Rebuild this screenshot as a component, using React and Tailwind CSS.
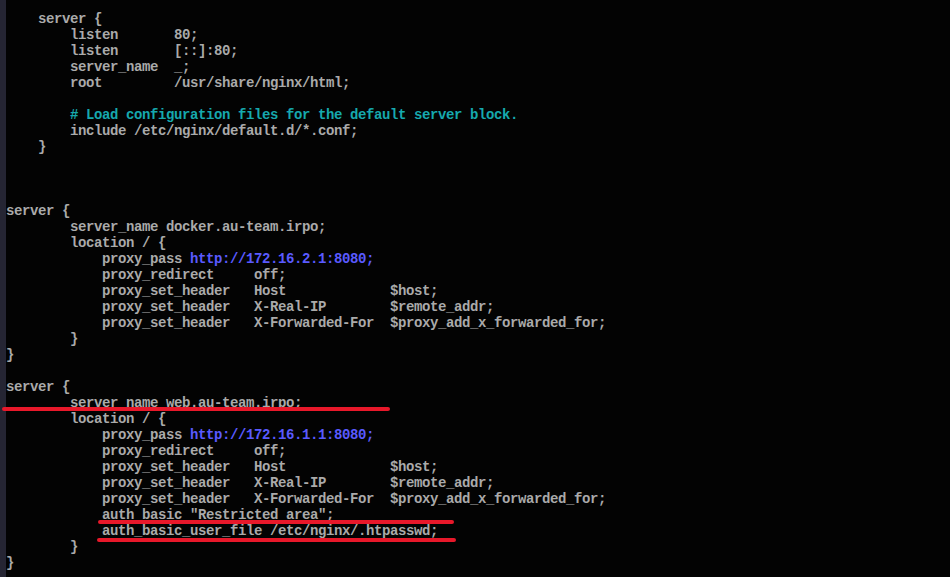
const G = "text-[#aaaaaa]";
const C = "text-[#16a9ae]";
const B = "text-[#5a5aff]";

const lines = [
  [["    server {"]],
  [["        listen       80;"]],
  [["        listen       [::]:80;"]],
  [["        server_name  _;"]],
  [["        root         /usr/share/nginx/html;"]],
  [[""]],
  [["        # Load configuration files for the default server block.", C]],
  [["        include /etc/nginx/default.d/*.conf;"]],
  [["    }"]],
  [[""]],
  [[""]],
  [[""]],
  [["server {"]],
  [["        server_name docker.au-team.irpo;"]],
  [["        location / {"]],
  [["            proxy_pass "], ["http://172.16.2.1:8080;", B]],
  [["            proxy_redirect     off;"]],
  [["            proxy_set_header   Host             $host;"]],
  [["            proxy_set_header   X-Real-IP        $remote_addr;"]],
  [["            proxy_set_header   X-Forwarded-For  $proxy_add_x_forwarded_for;"]],
  [["        }"]],
  [["}"]],
  [[""]],
  [["server {"]],
  [["        server_name web.au-team.irpo;"]],
  [["        location / {"]],
  [["            proxy_pass "], ["http://172.16.1.1:8080;", B]],
  [["            proxy_redirect     off;"]],
  [["            proxy_set_header   Host             $host;"]],
  [["            proxy_set_header   X-Real-IP        $remote_addr;"]],
  [["            proxy_set_header   X-Forwarded-For  $proxy_add_x_forwarded_for;"]],
  [['            auth_basic "Restricted area";']],
  [["            auth_basic_user_file /etc/nginx/.htpasswd;"]],
  [["        }"]],
  [["}"]],
];

const App = () => {
  return (
    <div className="relative w-[950px] h-[577px] overflow-hidden bg-[#030303] flex">
      <div className="w-[6px] shrink-0 bg-[#252533]" />
      <div
        className="pt-[11px] text-[14px] leading-4 tracking-[-0.4px] font-bold"
        style={{ fontFamily: '"Liberation Mono", "DejaVu Sans Mono", monospace' }}
      >
        {lines.map((parts, i) => (
          <div key={i} className={`h-4 whitespace-pre ${G}`}>
            {parts.map(([t, cls], j) => (
              <span key={j} className={cls || G}>
                {t}
              </span>
            ))}
          </div>
        ))}
      </div>

      {/* red marker annotations */}
      <div className="absolute left-[2px] top-[407px] w-[388px] h-[4px] rounded-full bg-[#e8182a]" />
      <div className="absolute left-[98px] top-[520px] w-[356px] h-[4px] rounded-full bg-[#e8182a]" />
      <div className="absolute left-[97px] top-[538px] w-[359px] h-[4px] rounded-full bg-[#e8182a]" />
    </div>
  );
};

export default App;
